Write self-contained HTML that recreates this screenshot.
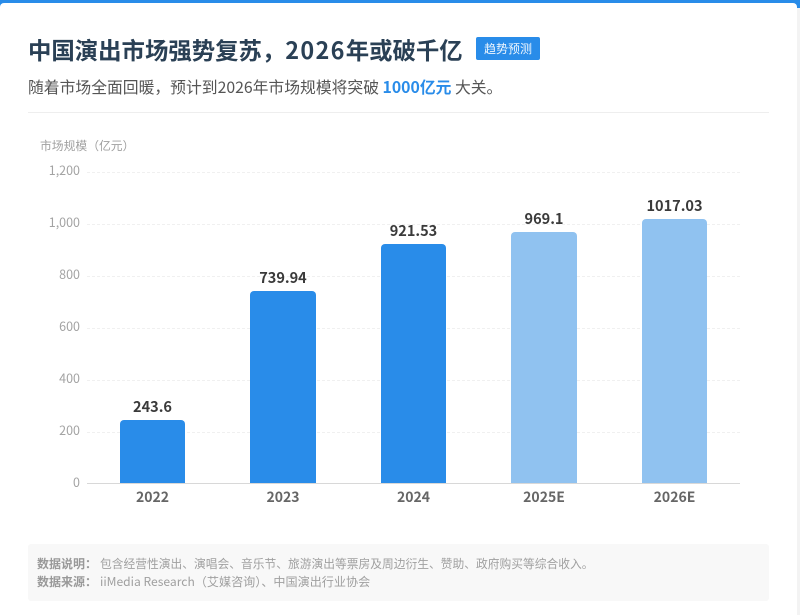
<!DOCTYPE html>
<html lang="zh-CN">
<head>
<meta charset="utf-8">
<style>
html,body{margin:0;padding:0;background:#fff;}
body{width:800px;height:615px;position:relative;overflow:hidden;font-family:"Noto Sans CJK SC","Liberation Sans",sans-serif;}
#wrap{position:absolute;left:0;top:0;width:800px;height:615px;filter:blur(0.3px);}
.a{position:absolute;white-space:nowrap;}
.bar{position:absolute;border-radius:4px 4px 0 0;}
.b1{background:#298ce9;}
.b2{background:#90c2f0;}
.grid{position:absolute;left:87px;width:653px;height:0;border-top:1px dashed #f0f0f0;}
.yl{position:absolute;right:720px;font-size:12.5px;line-height:16px;color:#a3a3a3;}
.val{position:absolute;width:100px;text-align:center;font-size:14.5px;font-weight:700;line-height:18px;color:#3a3a3a;}
.xl{position:absolute;width:100px;text-align:center;font-size:14px;font-weight:700;line-height:18px;color:#666;top:488px;}
</style>
</head>
<body>
<div id="wrap">
<div class="a" style="left:0;top:0;width:800px;height:615px;background:#f3f3f3;"></div>
<div class="a" style="left:0;top:0;width:800px;height:8px;background:#298ce9;"></div>
<div class="a" style="left:0;top:3px;width:797px;height:612px;background:#fff;border-radius:4px 4px 0 0;"></div>
<div class="a" style="left:28px;top:33px;font-size:23.4px;font-weight:700;line-height:32px;color:#2a4055;">中国演出市场强势复苏，<span style="letter-spacing:1.3px;">2026</span>年或破千亿</div>
<div class="a" style="left:476px;top:37px;width:64px;height:23px;background:#298ce9;border-radius:2px;color:#eef6fe;font-size:12px;line-height:23px;text-align:center;">趋势预测</div>
<div class="a" style="left:28px;top:75px;font-size:15.8px;line-height:24px;color:#555;">随着市场全面回暖，预计到2026年市场规模将突破 <span style="color:#298ce9;font-weight:700;">1000亿元</span> 大关。</div>
<div class="a" style="left:28px;top:112px;width:741px;height:1px;background:#eeeeee;"></div>

<div class="a" style="left:40px;top:138px;font-size:11.8px;line-height:16px;color:#a0a0a0;">市场规模（亿元）</div>

<div class="grid" style="top:172px;"></div>
<div class="grid" style="top:224px;"></div>
<div class="grid" style="top:276px;"></div>
<div class="grid" style="top:328px;"></div>
<div class="grid" style="top:380px;"></div>
<div class="grid" style="top:432px;"></div>
<div class="a" style="left:87px;top:483px;width:653px;height:1px;background:#d8d8d8;"></div>

<div class="yl" style="top:162px;">1,200</div>
<div class="yl" style="top:214px;">1,000</div>
<div class="yl" style="top:266px;">800</div>
<div class="yl" style="top:318px;">600</div>
<div class="yl" style="top:370px;">400</div>
<div class="yl" style="top:422px;">200</div>
<div class="yl" style="top:474px;">0</div>

<div class="bar b1" style="left:120px;width:65px;top:420px;height:63px;"></div>
<div class="bar b1" style="left:250px;width:66px;top:291px;height:192px;"></div>
<div class="bar b1" style="left:381px;width:65px;top:244px;height:239px;"></div>
<div class="bar b2" style="left:511px;width:66px;top:232px;height:251px;"></div>
<div class="bar b2" style="left:642px;width:65px;top:219px;height:264px;"></div>

<div class="val" style="left:102.5px;top:398px;">243.6</div>
<div class="val" style="left:233px;top:269px;">739.94</div>
<div class="val" style="left:363.5px;top:222px;">921.53</div>
<div class="val" style="left:494px;top:210px;">969.1</div>
<div class="val" style="left:624.5px;top:197px;">1017.03</div>

<div class="xl" style="left:102.5px;">2022</div>
<div class="xl" style="left:233px;">2023</div>
<div class="xl" style="left:363.5px;">2024</div>
<div class="xl" style="left:494px;">2025E</div>
<div class="xl" style="left:624.5px;">2026E</div>

<div class="a" style="left:28px;top:544px;width:741px;height:57px;background:#f8f8f8;border-radius:3px;"></div>
<div class="a" style="left:37px;top:555px;font-size:11.75px;line-height:18px;color:#a0a0a0;"><b style="display:inline-block;width:63px;font-size:12px;color:#999;">数据说明：</b>包含经营性演出、演唱会、音乐节、旅游演出等票房及周边衍生、赞助、政府购买等综合收入。</div>
<div class="a" style="left:37px;top:573px;font-size:12.1px;line-height:18px;color:#a0a0a0;"><b style="display:inline-block;width:63px;font-size:12px;color:#999;">数据来源：</b>iiMedia Research（艾媒咨询）、中国演出行业协会</div>
</div>
</body>
</html>
